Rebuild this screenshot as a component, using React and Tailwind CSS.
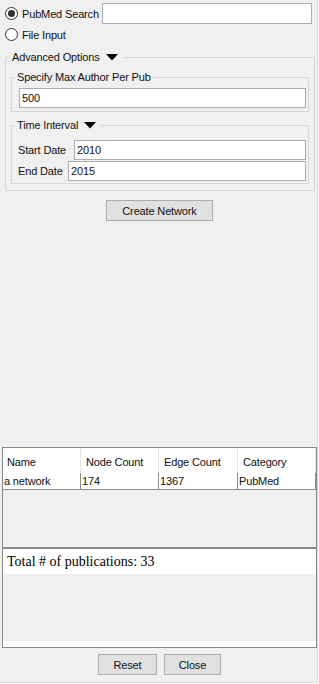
import React from "react";

function Radio({ checked }) {
  return (
    <div className="w-[13px] h-[13px] rounded-full border border-[#333333] bg-white flex items-center justify-center shrink-0">
      {checked && <div className="w-[7px] h-[7px] rounded-full bg-[#333333]" />}
    </div>
  );
}

function Tri() {
  return (
    <svg width="12" height="7" viewBox="0 0 12 7" className="ml-[6px] mr-[3px] block">
      <polygon points="0,0 12,0 6,6.5" fill="#000" />
    </svg>
  );
}

function Field({ value, className = "" }) {
  return (
    <div
      className={
        "h-[20px] bg-white border border-[#abadb3] flex items-center pl-[2px] text-[11px] leading-none " +
        className
      }
    >
      {value}
    </div>
  );
}

function Btn({ children, className = "" }) {
  return (
    <div
      className={
        "h-[21px] bg-[#e1e1e1] border border-[#adadad] flex items-center justify-center text-[11px] " +
        className
      }
    >
      {children}
    </div>
  );
}

export default function App() {
  return (
    <div className="w-[318px] h-[683px] bg-[#f0f0f0] border-r border-b border-[#d9d9d9] flex flex-col font-['Liberation_Sans',Arial,sans-serif] text-[11px] tracking-[-0.15px] text-[#111111] leading-[14px]">
      <div className="flex-1 flex flex-col overflow-hidden">
        {/* PubMed search row */}
        <div className="mt-[3px] h-[21px] flex items-center">
          <div className="w-[102px] shrink-0 flex items-center pl-[5px]">
            <Radio checked />
            <span className="ml-[4px] whitespace-nowrap">PubMed Search</span>
          </div>
          <div className="w-[210px] h-[21px] bg-white border border-[#abadb3]" />
        </div>
        {/* File input row */}
        <div className="h-[21px] flex items-center pl-[5px]">
          <Radio />
          <span className="ml-[4px]">File Input</span>
        </div>

        {/* Advanced Options */}
        <fieldset className="mt-[5px] ml-[5px] w-[310px] border border-[#d6d6d6] pb-[6px]">
          <legend className="ml-[4px] px-[2px] h-[14px] flex items-center whitespace-nowrap">
            <span>Advanced Options</span>
            <Tri />
          </legend>

          <fieldset className="mt-[6px] mx-[5px] w-[298px] border border-[#d6d6d6] pb-[3px]">
            <legend className="ml-[3px] px-[2px] h-[14px] flex items-center whitespace-nowrap">
              Specify Max Author Per Pub
            </legend>
            <Field value="500" className="mt-[4px] ml-[7px] mr-[2px]" />
          </fieldset>

          <fieldset className="mt-[6px] mx-[5px] w-[298px] border border-[#d6d6d6] pb-[2px]">
            <legend className="ml-[3px] px-[2px] h-[14px] flex items-center whitespace-nowrap">
              <span>Time Interval</span>
              <Tri />
            </legend>
            <div className="mt-[8px] flex items-center pl-[6px] pr-[2px]">
              <span className="w-[56px] shrink-0 whitespace-nowrap">Start Date</span>
              <Field value="2010" className="flex-1" />
            </div>
            <div className="mt-[1px] flex items-center pl-[6px] pr-[2px]">
              <span className="w-[50px] shrink-0 whitespace-nowrap">End Date</span>
              <Field value="2015" className="flex-1" />
            </div>
          </fieldset>
        </fieldset>

        <Btn className="mt-[9px] ml-[106px] w-[107px]">Create Network</Btn>
      </div>

      {/* Table pane */}
      <div className="ml-[2px] w-[315px] h-[101px] border border-[#8a8a8a] flex flex-col">
        <div className="grid grid-cols-[78px_78px_79px_78px] h-[25px] bg-white">
          {["Name", "Node Count", "Edge Count", "Category"].map((h, i) => (
            <div
              key={h}
              className={
                "border-r border-[#e5e5e5] flex items-center pt-[3px] whitespace-nowrap " +
                (i === 0 ? "pl-[4px]" : "pl-[5px]")
              }
            >
              {h}
            </div>
          ))}
        </div>
        <div className="grid grid-cols-[78px_78px_79px_78px] h-[17px] bg-white border-b border-[#8e8e8e]">
          {["a network", "174", "1367", "PubMed"].map((c) => (
            <div key={c} className="border-r border-[#8e8e8e] flex items-center pl-[1px] whitespace-nowrap">
              {c}
            </div>
          ))}
        </div>
        <div className="flex-1 bg-[#f0f0f0]" />
      </div>

      {/* Publications pane */}
      <div className="ml-[2px] w-[315px] h-[100px] border border-[#8a8a8a] flex flex-col">
        <div className="h-[25px] bg-white flex items-center pl-[4px] font-['Liberation_Serif','Times_New_Roman',serif] text-[14px] tracking-normal text-black whitespace-nowrap">
          Total # of publications: 33
        </div>
        <div className="flex-1 bg-[#f0f0f0]" />
        <div className="h-[6px] bg-white" />
      </div>

      {/* Buttons */}
      <div className="mt-[6px] mb-[7px] flex items-center ml-[98px] gap-[7px]">
        <Btn className="w-[59px]">Reset</Btn>
        <Btn className="w-[57px]">Close</Btn>
      </div>
    </div>
  );
}
